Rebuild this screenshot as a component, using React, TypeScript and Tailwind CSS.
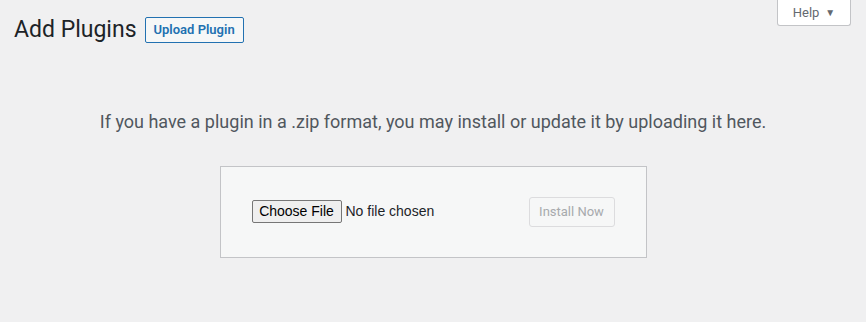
import React from "react";

export default function App() {
  return (
    <div className="min-h-[322px] w-full bg-[#f0f0f1] font-['Roboto',sans-serif] text-[#3c434a]">
      <div className="flex items-start justify-between pl-[14px] pr-[15px]">
        <div className="flex items-center pt-[15px]">
          <h1 className="text-[23px] font-normal leading-[1.3] text-[#1d2327]">Add Plugins</h1>
          <button className="ml-[8px] rounded-[2px] border border-[#2271b1] bg-[#f6f7f7] px-[8px] py-[4px] text-[13px] font-semibold leading-[16px] text-[#2271b1]">
            Upload Plugin
          </button>
        </div>
        <button className="flex h-[26px] w-[74px] items-center justify-center gap-[6px] rounded-b-[3px] border border-t-0 border-[#c3c4c7] bg-white text-[13px] text-[#646970]">
          <span>Help</span>
          <span className="text-[10px]">▼</span>
        </button>
      </div>
      <p className="mt-[65px] text-center text-[18px] leading-[24px] text-[#50575e]">
        If you have a plugin in a .zip format, you may install or update it by uploading it here.
      </p>
      <div className="mt-[32px] flex justify-center">
        <div className="flex w-[427px] items-center justify-between border border-[#c3c4c7] bg-[#f6f7f7] px-[31px] py-[30px]">
          <div className="flex items-center font-['Liberation_Sans',Arial,sans-serif] text-[14px]">
            <span className="flex h-[23px] w-[90px] items-center justify-center rounded-[2px] border border-[#767676] bg-[#efefef] text-black">
              Choose File
            </span>
            <span className="ml-[4px] text-[#1d2327]">No file chosen</span>
          </div>
          <button
            disabled
            className="h-[30px] w-[86px] rounded-[3px] border border-[#dcdcde] bg-[#f6f7f7] text-[13px] text-[#a7aaad]"
          >
            Install Now
          </button>
        </div>
      </div>
    </div>
  );
}
